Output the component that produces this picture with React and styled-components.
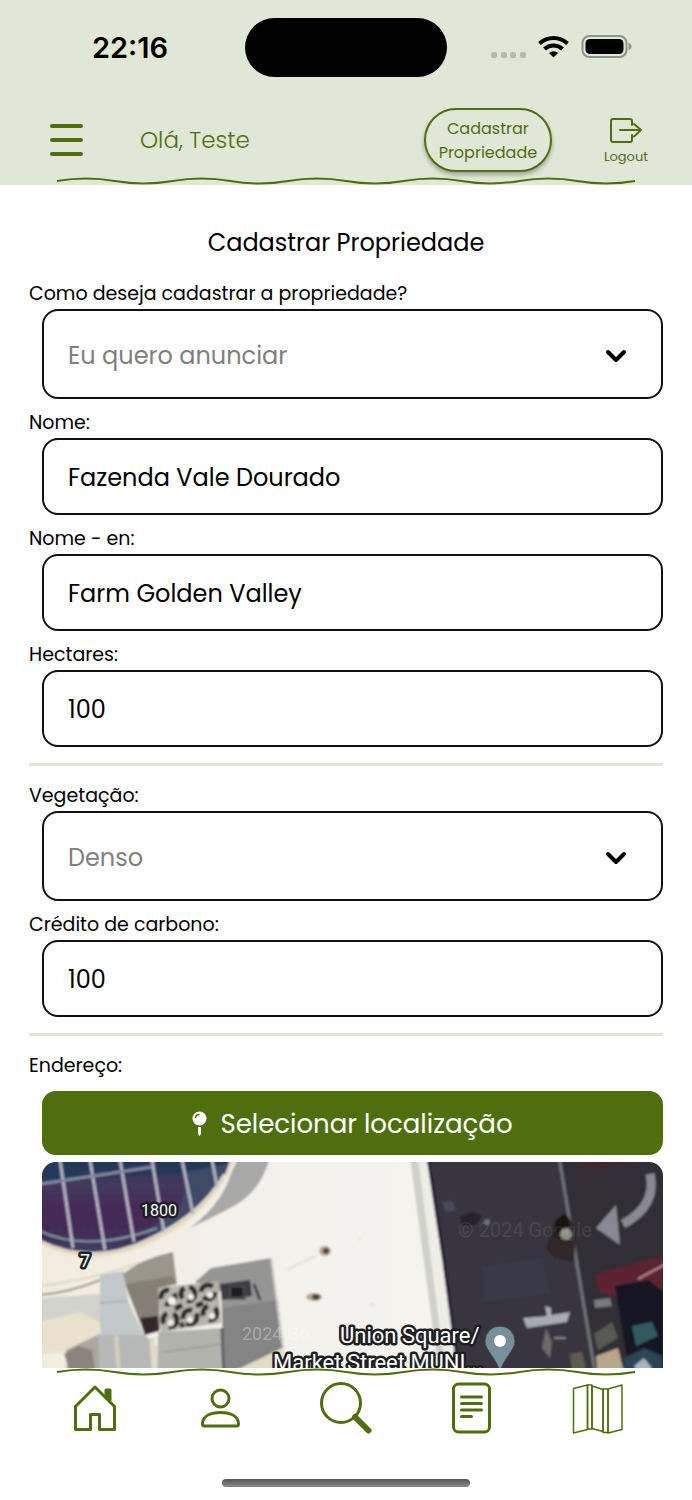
import React, { useState } from "react";
import styled, { createGlobalStyle } from "styled-components";

const GlobalStyle = createGlobalStyle`
  * { box-sizing: border-box; }
  body {
    margin: 0;
    background: #fff;
    font-family: Poppins, Inter, "Open Sans", sans-serif;
    color: #000;
  }
  button, input, select { font-family: inherit; }
`

const green = '#4f6f0f'

const kindOptions = ['Eu quero anunciar', 'Eu quero comprar']
const vegetationOptions = ['Denso', 'Médio', 'Baixo']

const Screen = styled.div`
  height: 100vh;
  display: flex;
  flex-direction: column;
`

const Header = styled.header`
  flex: none;
  background: #e1e7d7;
`

const StatusBar = styled.div`
  display: grid;
  grid-template-columns: 1fr 202px 1fr;
  align-items: center;
  padding: 18px 15px 0;
  margin-bottom: 31px;
`

const Time = styled.time`
  text-align: center;
  font-family: Inter, sans-serif;
  font-size: 29px;
  font-weight: 600;
`

const Island = styled.div`
  height: 59px;
  border-radius: 30px;
  background: #000;
`

const StatusIcons = styled.div`
  display: flex;
  justify-content: center;
`

const TopBar = styled.div`
  display: flex;
  align-items: center;
  height: 64px;
  padding: 0 44px 0 50px;
  margin-bottom: 5px;
  color: ${green};
`

const IconButton = styled.button`
  display: flex;
  flex-direction: column;
  align-items: center;
  gap: 2px;
  padding: 0;
  border: 0;
  background: none;
  color: ${green};
  font-size: 13px;
  line-height: 20px;
  cursor: pointer;
`

const Greeting = styled.p`
  flex: 1;
  margin: 0 0 0 57px;
  font-size: 23px;
  font-weight: 300;
`

const RegisterButton = styled.button`
  width: 128px;
  height: 64px;
  margin-right: 52px;
  padding: 2px 0 0;
  border: 2px solid ${green};
  border-radius: 32px;
  background: #e1e7d7;
  box-shadow: 0 3px 4px rgba(0, 0, 0, 0.3);
  color: ${green};
  font-size: 16px;
  line-height: 24px;
  cursor: pointer;
`

const WaveLine = styled.svg`
  display: block;
  width: 100%;
  height: 8px;
  padding: 0 56px;
`

const Main = styled.main`
  flex: 1;
  min-height: 0;
  overflow-y: auto;
  scrollbar-width: none;
  padding: 40px 29px 0;
`

const Title = styled.h1`
  margin: 0 0 18px;
  text-align: center;
  font-size: 24px;
  line-height: 36px;
  font-weight: 400;
`

const FieldBox = styled.div`
  display: grid;
  grid-template-columns: 13px 1fr;

  & + & { margin-top: 9px; }
`

const Label = styled.label`
  grid-column: 1 / -1;
  font-size: 19px;
  line-height: 30px;
`

const Input = styled.input`
  grid-column: 2;
  min-width: 0;
  height: 77px;
  padding: 2px 24px 0;
  border: 2px solid #111;
  border-radius: 16px;
  background: #fff;
  color: #000;
  font-size: 24px;
`

const Select = styled.select`
  grid-column: 2;
  grid-row: 2;
  min-width: 0;
  height: 90px;
  padding: 2px 24px 0;
  border: 2px solid #111;
  border-radius: 16px;
  background: #fff;
  color: #808080;
  font-size: 24px;
  appearance: none;
`

const Chevron = styled.svg`
  grid-column: 2;
  grid-row: 2;
  place-self: center end;
  margin: 4px 36px 0 0;
  pointer-events: none;
`

const Divider = styled.hr`
  height: 3px;
  margin: 16px 0 15px;
  border: 0;
  background: #e1e7d7;
`

const LocationButton = styled.button`
  grid-column: 2;
  display: flex;
  align-items: center;
  justify-content: center;
  gap: 13px;
  height: 64px;
  margin: 10px 0 7px;
  padding: 2px 0 0;
  border: 0;
  border-radius: 14px;
  background: ${green};
  color: #fff;
  font-size: 26px;
  cursor: pointer;
`

const MapView = styled.svg`
  grid-column: 2;
  display: block;
  width: 100%;
  height: 320px;
  border-radius: 14px;
`

const MapLabel = styled.text`
  font-family: Roboto, sans-serif;
  font-size: ${props => props.$size}px;
  fill: #fff;
  stroke: #1d1f22;
  stroke-width: 5px;
  stroke-linejoin: round;
  paint-order: stroke;
`

const Watermark = styled.text`
  font-family: Roboto, sans-serif;
  font-size: ${props => props.$size}px;
  fill: #fff;
`

const Footer = styled.footer`
  flex: none;
  background: #fff;
`

const Nav = styled.nav`
  display: grid;
  grid-template-columns: repeat(5, 1fr);
  justify-items: center;
  padding: 6px 32px 0;

  a {
    height: 52px;
    color: ${green};
  }
`

const HomeIndicator = styled.div`
  width: 248px;
  height: 8px;
  margin: 45px auto 13px;
  border-radius: 4px;
  background: linear-gradient(#555, #8a8a8a);
`

function Wave (){
  return (
    <WaveLine viewBox="0 0 580 8" preserveAspectRatio="none" fill="none" stroke={green} strokeWidth="2" aria-hidden="true">
      <path d="M1 4q28.9-5 57.8 0t57.8 0 57.8 0 57.8 0 57.8 0 57.8 0 57.8 0 57.8 0 57.8 0 57.8 0" />
    </WaveLine>
  )
}

function SelectField ({ id, label, options }){
  const [value, setValue] = useState(options[0])
  return (
    <FieldBox>
      <Label htmlFor={id}>{label}</Label>
      <Select id={id} value={value} onChange={e => setValue(e.target.value)}>
        {
          options.map(ele=>{
            return (
              <option key={ele}>{ele}</option>
            )
          })
        }
      </Select>
      <Chevron width="22" height="14" viewBox="0 0 22 14" fill="none" stroke="#000" strokeWidth="4" strokeLinecap="round" strokeLinejoin="round">
        <path d="M3 3l8 8 8-8" />
      </Chevron>
    </FieldBox>
  )
}

function TextField ({ id, label, value }){
  return (
    <FieldBox>
      <Label htmlFor={id}>{label}</Label>
      <Input id={id} type="text" defaultValue={value} />
    </FieldBox>
  )
}

function SatelliteMap (){
  return (
    <MapView viewBox="0 0 621 320" preserveAspectRatio="xMinYMin slice" role="img" aria-label="Mapa">
      <defs>
        <filter id="soft" x="0" y="0" width="100%" height="100%">
          <feGaussianBlur stdDeviation="1" />
        </filter>
        <linearGradient id="glass" x1="0" y1="0" x2="0" y2="1">
          <stop offset="0" stopColor="#2a3558" />
          <stop offset="0.3" stopColor="#443a5c" />
          <stop offset="0.5" stopColor="#452c5a" />
          <stop offset="0.85" stopColor="#432d58" />
          <stop offset="1" stopColor="#3b4560" />
        </linearGradient>
        <linearGradient id="roof" x1="0" y1="0" x2="1" y2="0">
          <stop offset="0" stopColor="#f2ecdf" />
          <stop offset="0.4" stopColor="#f4f2ed" />
          <stop offset="1" stopColor="#f5f5f1" />
        </linearGradient>
      </defs>
      <rect width="621" height="320" fill="#f1efe8" />
      <g filter="url(#soft)">
        <rect x="-5" y="-5" width="631" height="330" fill="url(#roof)" />

        {/* dome */}
        <path d="M192-5h36q-8 32-34 48-22 12-46 23 40-30 44-71z" fill="#a9a9a7" />
        <path d="M-5 80Q50 108 110 80 174 52 196-5H-5z" fill="#ddd6c4" />
        <path d="M-5 76Q50 104 106 76 168 47 189-5H-5z" fill="url(#glass)" />
        <path d="M-5-5h194l-6 17-76 1L-5 22z" fill="#27395a" />
        <path d="M108 75Q166 47 186 2l-44 8q4 30-10 40-12 12-32 20z" fill="#41506a" opacity="0.8" />
        <path d="M-5 68q50 24 120-2" fill="none" stroke="#8397a5" strokeWidth="2" />
        <g stroke="#b5b4c4" strokeWidth="3" fill="none">
          <path d="M18-2l13 88M48-2l15 90M78-2l14 82M110-2l12 72M140-2l11 54M170-2l5 26" />
          <path d="M-2 22l60-9 52-8" stroke="#8489a0" />
        </g>
        <path d="M-5 82Q50 110 112 80 172 52 195-5" fill="none" stroke="#f2ead5" strokeWidth="3" />
        <path d="M-2 133Q30 130 58 118" fill="none" stroke="#a39a86" strokeWidth="2" />
        <path d="M-2 124Q50 118 100 100" fill="none" stroke="#dfd6c0" strokeWidth="2" />

        {/* roofs */}
        <path d="M-2 136l60-4v32l-60 12z" fill="#d3d3ce" />
        <path d="M-2 160l40-10 20 10-2 16-34 14-24 2z" fill="#eae1cd" />
        <path d="M24 188l34-16 45 4 2 144H30z" fill="#a9a79f" />
        <path d="M22 192l14-8 14 4 4 26H30z" fill="#8a847b" />
        <path d="M56 172h46l12 12v136H62z" fill="#b7b9b9" />
        <path d="M58 113l24-4 4 30 16 34H58z" fill="#c2c7c9" />
        <path d="M58 141l28-2" stroke="#9ea5a7" strokeWidth="1" />
        <path d="M81 112q20-16 50-22l4 32-19 4 2 42-15 5-18-46z" fill="#9a968c" />
        <path d="M84 122l46-8 4 8-18 4 2 42-15 5-18-46z" fill="#857f76" />
        <path d="M98 156l18-2 1 15-14 4z" fill="#35272a" />
        <path d="M153 120l16-14 60-10 12 90-36 20 1 114h-21l-4-144-2-46z" fill="#959594" />
        <path d="M180 146l56-8 5 48-36 20 1 114h-21z" fill="#848485" />
        <path d="M229 96l12 90-14 8" fill="none" stroke="#c9c8c4" strokeWidth="2" />
        <path d="M116 170l65-4 5 154H112z" fill="#b3b3ae" />
        <path d="M122 190l60-8" stroke="#8e8e8a" strokeWidth="1" />
        <path d="M180 166l6 154" stroke="#5f5f63" strokeWidth="3" />
        <path d="M110 176l4 60" stroke="#e2dac8" strokeWidth="5" />
        <path d="M74 174l4 50" stroke="#d9cfba" strokeWidth="4" />
        <path d="M178 122l30-4 2 16-30 4z" fill="#3a3b3f" />
        <path d="M188 124h14v12h-14zM212 122l6 16" fill="#1c1d22" stroke="#44454a" strokeWidth="3" />
        <path d="M116 126l60-7 3 42-60 9z" fill="#b6b4ab" />
        <g fill="none" stroke="#2a292b" strokeWidth="5">
          <circle cx="126" cy="135" r="7" strokeDasharray="14 6" />
          <circle cx="146" cy="132" r="7" strokeDasharray="12 5" />
          <circle cx="166" cy="130" r="7" strokeDasharray="16 6" />
          <circle cx="128" cy="158" r="7" strokeDasharray="12 6" />
          <circle cx="148" cy="155" r="7" strokeDasharray="15 5" />
          <circle cx="168" cy="151" r="7" strokeDasharray="12 7" />
          <path d="M133 147l7-4M154 144l7-3M138 164l4-2" />
        </g>
        <g fill="#f4f1ea">
          <circle cx="130" cy="139" r="4" />
          <circle cx="149" cy="135" r="3" />
          <circle cx="168" cy="133" r="3" />
          <circle cx="129" cy="161" r="3" />
          <circle cx="148" cy="158" r="3" />
          <circle cx="170" cy="154" r="3" />
        </g>
        <g fill="#b5a596">
          <ellipse cx="283" cy="89" rx="6" ry="5" />
          <ellipse cx="272" cy="135" rx="8" ry="4" />
        </g>
        <g fill="#54413a">
          <circle cx="284" cy="89" r="3" />
          <ellipse cx="274" cy="135" rx="4" ry="3" />
        </g>
        <path d="M244 108l30-14M316 78l3-3M328 142l5 2" stroke="#e8e4dc" strokeWidth="3" />
        <path d="M190 210l50-24 10 30-60 20z" fill="#e2dac8" />

        {/* street */}
        <path d="M368-5h20l44 330h-20z" fill="#cfd0c6" />
        <path d="M376-5h12l44 330h-14z" fill="#eeeee6" />
        <path d="M386-5h240v330H432L400 92z" fill="#37353f" />
        <path d="M386-5l16 105 30 225" fill="none" stroke="#211f35" strokeWidth="3" />
        <path d="M520-5h106v330h-52z" fill="#332f36" />
        <path d="M440 104l60-8 8 36-66 8z" fill="#393b46" />
        <path d="M400 40l10-2 4 10-11 2z" fill="#47485a" />
        <path d="M418 55l12-5 10 4-6 9-14 1z" fill="#25242b" />
        <circle cx="445" cy="60" r="3" fill="#6b6e78" />
        <path d="M538-5h60l-6 6-50 4z" fill="#48242e" />
        <path d="M553 112l68-18v32l-50 8-14-4z" fill="#5c2230" />
        <path d="M596 117l26-14" stroke="#b78a8c" strokeWidth="2" />
        <path d="M517-5l36 215 20 115" fill="none" stroke="#6f7474" strokeWidth="3" />
        <path d="M512 60l12-8 10 14-2 34-20-4-8-10z" fill="#33272b" />
        <path d="M514 58l8-6 6 6-4 20-12-4z" fill="#15130f" />
        <circle cx="524" cy="72" r="6" fill="#8f8f85" />
        <path d="M608 12q7 32-27 50" fill="none" stroke="#888994" strokeWidth="9" />
        <path d="M554 66l20-23 4 40z" fill="#888994" />
        <path d="M481 156l24-2-2-10 6 2v7l19-3-3 10-40 6z" fill="#a7abb6" />
        <path d="M504 166l6 14-2 16-8-10z" fill="#6e6a69" />
        <path d="M512 176h12" stroke="#80838c" strokeWidth="2" />
        <path d="M552 138l16-2 2 8-17 2z" fill="#777c80" />
        <path d="M552 172l18-12 6 16-20 12z" fill="#575a53" />
        <path d="M573 124l34-6 14 12v80h-34z" fill="#171923" />
        <path d="M590 164l20-4 6 14-22 10z" fill="#325a60" />
        <path d="M554 194l22-8 6 24-26 8z" fill="#b7a68c" />
        <path d="M582 196l20-10 18 8v30h-36z" fill="#2b4456" />
        <path d="M592 204l10-8 8 10-10 8z" fill="#a8b5bd" />
        <path d="M528 192l12-2 4 16-14 4z" fill="#5f5b50" />
      </g>

      <Watermark x="416" y="75" $size={20} opacity="0.08">© 2024 Google</Watermark>
      <Watermark x="200" y="178" $size={18} opacity="0.3">2024 Go</Watermark>

      <MapLabel x="99" y="54" $size={16}>1800</MapLabel>
      <MapLabel x="38" y="105" $size={18}>7</MapLabel>
      <MapLabel x="298" y="181" $size={22}>Union Square/</MapLabel>
      <MapLabel x="231" y="208" $size={22}>Market Street MUNI...</MapLabel>

      <path d="M458 164a15 15 0 0 1 15 15c0 10-11 16-15 31-4-15-15-21-15-31a15 15 0 0 1 15-15z" fill="#78909c" stroke="#3b474d" strokeWidth="1" />
      <circle cx="458" cy="179" r="6" fill="#fff" />
    </MapView>
  )
}

export default function App (){
  return (
    <>
      <GlobalStyle />
      <Screen>
        <Header>
          <StatusBar>
            <Time>22:16</Time>
            <Island />
            <StatusIcons>
              <svg width="142" height="26" viewBox="0 0 142 26" aria-hidden="true">
                <g fill="#b4b9ac">
                  <rect x="0" y="17" width="6" height="6" rx="2" />
                  <rect x="10" y="17" width="6" height="6" rx="2" />
                  <rect x="19" y="17" width="6" height="6" rx="2" />
                  <rect x="29" y="17" width="6" height="6" rx="2" />
                </g>
                <g fill="none" stroke="#000" strokeWidth="4">
                  <path d="M48.500 8.500a20.500 20.500 0 0 1 28 0" />
                  <path d="M53.500 14a13.500 13.500 0 0 1 18 0" />
                </g>
                <path d="M62.500 22.500l-4.500-4.500a6.500 6.500 0 0 1 9 0z" />
                <rect x="91.500" y="1" width="44" height="21" rx="7" fill="none" stroke="#8e9288" strokeWidth="2" />
                <rect x="94.500" y="4" width="38" height="15" rx="4.500" />
                <path d="M137.500 8q3 1 3 3.500t-3 3.500z" fill="#8e9288" />
              </svg>
            </StatusIcons>
          </StatusBar>
          <TopBar>
            <IconButton type="button" aria-label="Menu">
              <svg width="33" height="34" viewBox="0 0 33 34" stroke="currentColor" strokeWidth="4" strokeLinecap="round">
                <path d="M2 3h29M2 17h29M2 31h29" />
              </svg>
            </IconButton>
            <Greeting>Olá, Teste</Greeting>
            <RegisterButton type="button">Cadastrar<br/>Propriedade</RegisterButton>
            <IconButton type="button">
              <svg width="34" height="32" viewBox="0 -4 34 32" fill="none" stroke="currentColor" strokeWidth="2" strokeLinecap="round" strokeLinejoin="round">
                <path d="M23 8V4q0-2-2-2H4Q2 2 2 4v19q0 2 2 2h17q2 0 2-2v-5" />
                <path d="M11 13h21M25 7l7 6-7 6.500" />
              </svg>
              Logout
            </IconButton>
          </TopBar>
          <Wave />
        </Header>

        <Main>
          <Title>Cadastrar Propriedade</Title>
          <SelectField id="kind" label="Como deseja cadastrar a propriedade?" options={kindOptions} />
          <TextField id="name" label="Nome:" value="Fazenda Vale Dourado" />
          <TextField id="nameEn" label="Nome - en:" value="Farm Golden Valley" />
          <TextField id="hectares" label="Hectares:" value="100" />
          <Divider />
          <SelectField id="vegetation" label="Vegetação:" options={vegetationOptions} />
          <TextField id="carbon" label="Crédito de carbono:" value="100" />
          <Divider />
          <FieldBox>
            <Label htmlFor="location">Endereço:</Label>
            <LocationButton id="location" type="button">
              <svg width="15" height="26" viewBox="0 0 15 26" fill="#fff" aria-hidden="true">
                <circle cx="7.500" cy="7.500" r="7" />
                <path d="M3.500 7a4 4 0 0 1 4-3.500" fill="none" stroke={green} strokeWidth="1.500" />
                <path d="M6 16h3v7l-1.500 2L6 23z" />
              </svg>
              Selecionar localização
            </LocationButton>
            <SatelliteMap />
          </FieldBox>
        </Main>

        <Footer>
          <Wave />
          <Nav>
            <a href="#inicio" aria-label="Início">
              <svg width="52" height="52" viewBox="0 0 52 52" fill="none" stroke="currentColor" strokeWidth="3" strokeLinejoin="round">
                <path d="M6.500 24.500L26 5l19.500 19.500v23h-15v-15h-9v15h-15z" />
                <path d="M37 14V8h4v10z" fill="currentColor" />
              </svg>
            </a>
            <a href="#perfil" aria-label="Perfil">
              <svg width="52" height="52" viewBox="0 0 52 52" fill="none" stroke="currentColor" strokeWidth="3" strokeLinejoin="round">
                <circle cx="26.500" cy="16.500" r="8.500" />
                <path d="M8.500 42c0-8 8-11.500 18-11.500s18 3.500 18 11.500q0 2-2 2h-32q-2 0-2-2z" />
              </svg>
            </a>
            <a href="#buscar" aria-label="Buscar">
              <svg width="52" height="52" viewBox="0 0 52 52" fill="none" stroke="currentColor">
                <circle cx="21" cy="21" r="19.500" strokeWidth="3" />
                <path d="M35 35l13.500 13.500" strokeWidth="6" strokeLinecap="round" />
              </svg>
            </a>
            <a href="#documentos" aria-label="Documentos">
              <svg width="52" height="52" viewBox="0 0 52 52" fill="none" stroke="currentColor" strokeWidth="3" strokeLinecap="round">
                <rect x="7.500" y="2" width="36" height="48" rx="5" />
                <path d="M15.500 15h20M15.500 21.500h20M15.500 28h20M15.500 34.500h10" />
              </svg>
            </a>
            <a href="#mapa" aria-label="Mapa">
              <svg width="52" height="52" viewBox="0 0 52 52" fill="none" stroke="currentColor" strokeWidth="1.500" strokeLinejoin="round">
                <path d="M2.500 6.500L16.500 3v44.500L2.500 51zM21 4l11 3.500v42L21 46.500zM37 7l14-4v44.500l-14 3.500z" />
                <path d="M16.500 3h4.500v44h-4.500zM32 7h5v43.500h-5z" />
              </svg>
            </a>
          </Nav>
          <HomeIndicator />
        </Footer>
      </Screen>
    </>
  )
}
